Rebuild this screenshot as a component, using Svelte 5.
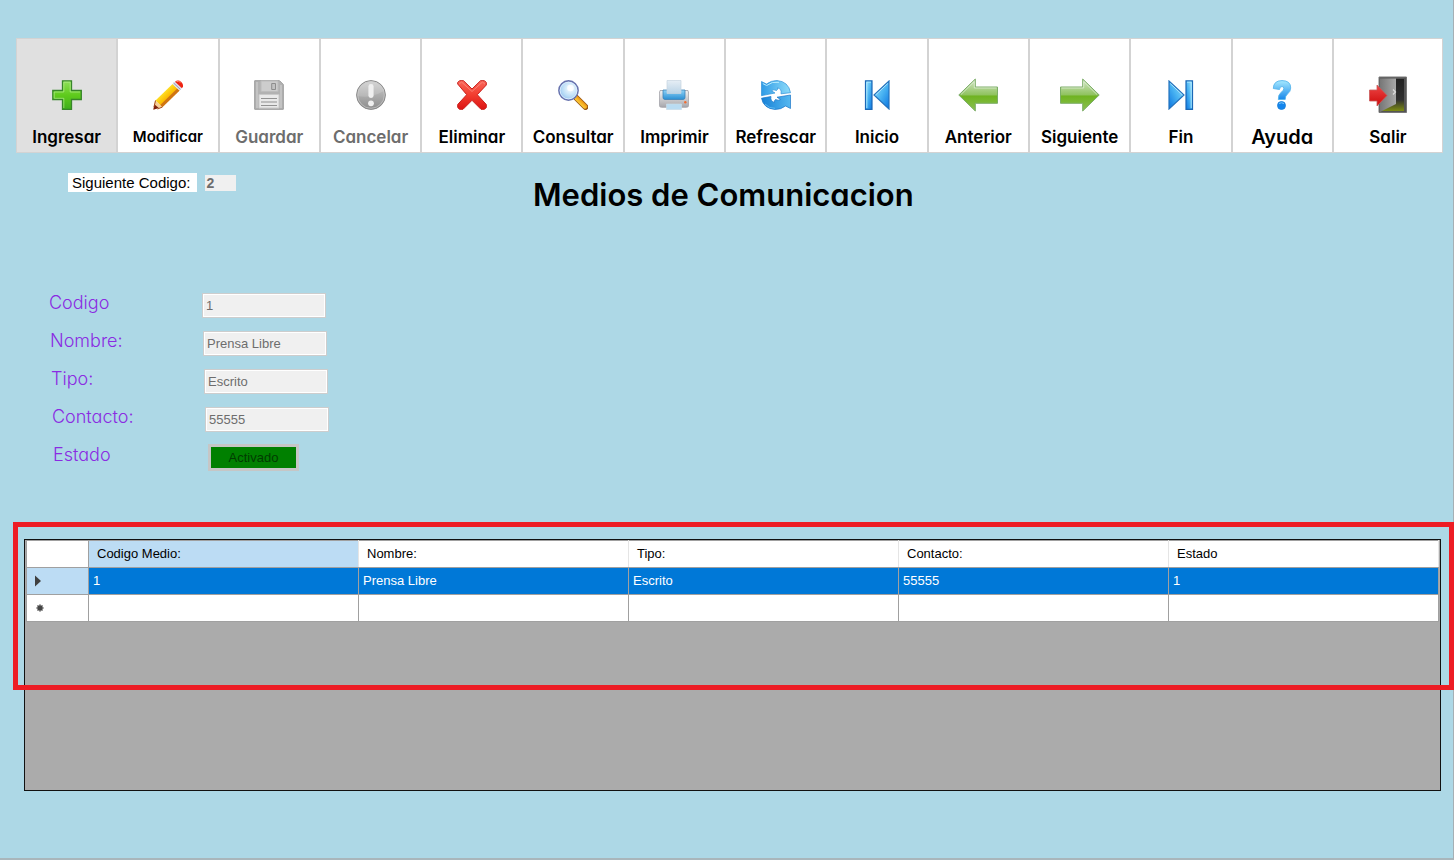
<script>
  const actions = [
    { id: 'ingresar', label: 'Ingresar', active: true },
    { id: 'modificar', label: 'Modificar', size: 'small' },
    { id: 'guardar', label: 'Guardar', disabled: true },
    { id: 'cancelar', label: 'Cancelar', disabled: true },
    { id: 'eliminar', label: 'Eliminar' },
    { id: 'consultar', label: 'Consultar' },
    { id: 'imprimir', label: 'Imprimir' },
    { id: 'refrescar', label: 'Refrescar' },
    { id: 'inicio', label: 'Inicio' },
    { id: 'anterior', label: 'Anterior' },
    { id: 'siguiente', label: 'Siguiente' },
    { id: 'fin', label: 'Fin' },
    { id: 'ayuda', label: 'Ayuda', size: 'large' },
    { id: 'salir', label: 'Salir' }
  ];

  const fields = [
    { id: 'codigo', label: 'Codigo', value: '1' },
    { id: 'nombre', label: 'Nombre:', value: 'Prensa Libre' },
    { id: 'tipo', label: 'Tipo:', value: 'Escrito' },
    { id: 'contacto', label: 'Contacto:', value: '55555' }
  ];

  const columns = ['Codigo Medio:', 'Nombre:', 'Tipo:', 'Contacto:', 'Estado'];
  const record = ['1', 'Prensa Libre', 'Escrito', '55555', '1'];
</script>

<svg class="defs" width="0" height="0" aria-hidden="true">
  <defs>
    <linearGradient id="plus" x1="0" y1="0" x2="0" y2="1"><stop offset="0" stop-color="#8fe05a" /><stop offset=".5" stop-color="#5fcb1c" /><stop offset="1" stop-color="#3fae1c" /></linearGradient>
    <linearGradient id="pencil" x1="0" y1="0" x2="1" y2="1"><stop offset=".3" stop-color="#ffe92e" /><stop offset=".55" stop-color="#fbb800" /><stop offset=".75" stop-color="#c96a10" /></linearGradient>
    <linearGradient id="metal" x1="0" y1="0" x2="0" y2="1"><stop offset="0" stop-color="#cfcfcf" /><stop offset="1" stop-color="#8c8c8c" /></linearGradient>
    <linearGradient id="cross" x1="0" y1="0" x2="0" y2="1"><stop offset="0" stop-color="#f9665a" /><stop offset=".5" stop-color="#f23d2f" /><stop offset="1" stop-color="#dc1414" /></linearGradient>
    <radialGradient id="lens" cx=".6" cy=".4" r=".7"><stop offset="0" stop-color="#fafeff" /><stop offset=".6" stop-color="#b9dcf6" /><stop offset="1" stop-color="#8ab8ea" /></radialGradient>
    <linearGradient id="handle" x1="0" y1="1" x2="1" y2="0"><stop offset=".3" stop-color="#ffd23c" /><stop offset=".7" stop-color="#ef9410" /></linearGradient>
    <linearGradient id="paper" x1="0" y1="0" x2="0" y2="1"><stop offset="0" stop-color="#e6eef5" /><stop offset="1" stop-color="#b9d3e6" /></linearGradient>
    <linearGradient id="tray" x1="0" y1="0" x2="0" y2="1"><stop offset="0" stop-color="#8ed2f7" /><stop offset="1" stop-color="#2a8fd3" /></linearGradient>
    <linearGradient id="body" x1="0" y1="0" x2="0" y2="1"><stop offset="0" stop-color="#f4f4f4" /><stop offset="1" stop-color="#a6a6ab" /></linearGradient>
    <linearGradient id="blue" x1="0" y1="0" x2="1" y2="1"><stop offset="0" stop-color="#a4e8ff" /><stop offset=".5" stop-color="#4ab4f2" /><stop offset="1" stop-color="#0a74e0" /></linearGradient>
    <linearGradient id="swirl-top" x1="0" y1="0" x2="1" y2="0"><stop offset="0" stop-color="#2f9be6" /><stop offset="1" stop-color="#8edcfa" /></linearGradient>
    <linearGradient id="swirl-bottom" x1="0" y1="0" x2="1" y2="0"><stop offset="0" stop-color="#1680d6" /><stop offset="1" stop-color="#55b8f0" /></linearGradient>
    <linearGradient id="green" x1="0" y1="0" x2="0" y2="1"><stop offset=".1" stop-color="#c6e0b4" /><stop offset=".5" stop-color="#8fc25e" /><stop offset=".53" stop-color="#6fb321" /><stop offset="1" stop-color="#8cc152" /></linearGradient>
    <linearGradient id="help" x1="0" y1="0" x2="0" y2="1"><stop offset="0" stop-color="#a6e9ff" /><stop offset="1" stop-color="#1687ea" /></linearGradient>
    <linearGradient id="door" x1="0" y1="0" x2="1" y2="0"><stop offset="0" stop-color="#777" /><stop offset="1" stop-color="#a8a8a8" /></linearGradient>
    <linearGradient id="exit" x1="0" y1="0" x2="0" y2="1"><stop offset="0" stop-color="#ee4646" /><stop offset="1" stop-color="#cc0909" /></linearGradient>
    <linearGradient id="floor" x1="0" y1="0" x2="0" y2="1"><stop offset="0" stop-color="#222" /><stop offset=".65" stop-color="#303030" /><stop offset="1" stop-color="#7d8c12" /></linearGradient>
  </defs>
</svg>

{#snippet icon(id)}
  {#if id === 'anterior' || id === 'siguiente'}
    <svg width="40" height="34" viewBox="0 0 40 34" aria-hidden="true">
      <g transform={id === 'siguiente' ? 'translate(40 0) scale(-1 1)' : undefined}>
        <path d="M.8 17 17.3 1v8H39.5V25.300H17.300V33Z" fill="url(#green)" stroke="#7cad68" />
        <path d="M3 16.500 16.300 3.500V10H38.500" fill="none" stroke="#e2f0da" stroke-opacity=".7" />
      </g>
    </svg>
  {:else if id === 'salir'}
    <svg width="38" height="38" viewBox="0 0 38 38" aria-hidden="true">
      <path d="M10 1H37.500V36.500H10Z" fill="#555" stroke="#777" />
      <path d="M12 3H35V35H12Z" fill="url(#floor)" />
      <path d="M11 2.500H27V28L11 36Z" fill="url(#door)" />
      <path d="M24 13.500l2.500 2.500-2.500 2.500" fill="none" stroke="#ddd" stroke-width="1.200" />
      <path d="M.5 14H8V9L18 19.500 8 30V25H.5Z" fill="url(#exit)" stroke="#c95c5c" stroke-width=".8" />
    </svg>
  {:else}
    <svg width="30" height="30" viewBox="0 0 30 30" aria-hidden="true">
      {#if id === 'ingresar'}
        <path d="M10.500.8H19.500V10.500H29.300V19.500H19.500V29.300H10.500V19.500H.8V10.500H10.500Z" fill="url(#plus)" stroke="#37852a" stroke-width="1.300" />
        <path d="M11.800 28V18.300H2.200V12H11.800V2.200H18.200V12H28" fill="none" stroke="#b0ec8a" stroke-opacity=".7" />
      {:else if id === 'modificar'}
        <path d="M.5 29.500 2.500 20.500 9.500 27Z" fill="#f7cf98" />
        <path d="M.3 29.700 1.300 24.300 5.800 28Z" fill="#7c1f0c" />
        <path d="M2.500 20.500 19.500 4 26.500 10.500 9.500 27Z" fill="url(#pencil)" />
        <path d="M9.500 27 26.500 10.500l-2.200-2L7.300 25Z" fill="#cf7413" />
        <path d="M2.500 20.500 1 27M9.500 27 4.500 29" stroke="#a34716" />
        <path d="m19.500 4 2.600-2.400 6.700 6.500-2.300 2.400Z" fill="#dcdfeb" />
        <path d="m20.600 3 6.900 6.500" stroke="#8b88a0" stroke-width=".8" />
        <path d="M22 1.700Q25-.8 28.300 2 31.500 5.500 28.900 8.200Z" fill="#ee2413" />
        <path d="M23.500 1.600q2-1 4 .8" stroke="#ff8b70" fill="none" />
      {:else if id === 'guardar'}
        <path d="M.7.700H25.500L29.300 4.500V29.300H.7Z" fill="#b2b2b2" stroke="#9b9b9b" />
        <path d="M2 2H4V28H2ZM26 5h2v23h-2z" fill="#c3c3c3" />
        <path d="M7 1H24V11.500H7Z" fill="#cdcdcd" stroke="#bcbcbc" />
        <path d="M17.700 3.500H21.500V9.500H17.700Z" fill="#c2c2c2" stroke="#8d8d8d" />
        <path d="M5 14.500H25V28H5Z" fill="#e9e9e9" stroke="#c9c9c9" />
        <path d="M7 18.500H23M7 22H23M7 25.500H23" stroke="#929292" stroke-width="1.200" />
      {:else if id === 'cancelar'}
        <circle cx="15" cy="15" r="14.400" fill="url(#metal)" stroke="#898989" />
        <circle cx="15" cy="15" r="13.300" fill="none" stroke="#c4c4c4" stroke-width=".8" />
        <path d="M1.800 16Q13 19 28 11A13.400 13.400 0 0 0 1.800 16Z" fill="#fff" fill-opacity=".15" />
        <rect x="12.400" y="4" width="5.200" height="14" rx="2.400" fill="#efefef" />
        <circle cx="15" cy="23.300" r="2.900" fill="#efefef" />
      {:else if id === 'eliminar'}
        <path d="M.7 4V2.500L2.500.700H6.500L15 9 23.500.700H27.500L29.300 2.500V5L20.300 14.700 29.300 24.500V27.500L27.500 29.300H24L15 20.300 6 29.300H2.500L.7 27.500V24.500L9.700 14.700Z" fill="url(#cross)" stroke="#c8201c" stroke-linejoin="round" />
        <path d="M2 4.200 4.500 2 15 11.500 25.500 2 28 4.200" fill="none" stroke="#ff9f91" stroke-opacity=".6" />
      {:else if id === 'consultar'}
        <path d="M18 17.500 27.500 27" stroke="#9a5814" stroke-width="6" stroke-linecap="round" />
        <path d="M18.500 18 27 26.500" stroke="url(#handle)" stroke-width="4.200" stroke-linecap="round" />
        <circle cx="10.500" cy="10.500" r="9.600" fill="url(#lens)" stroke="#6873ae" stroke-width="1.600" />
        <circle cx="10.500" cy="10.500" r="8.400" fill="none" stroke="#e5f3ff" stroke-width=".8" />
        <circle cx="12.500" cy="8" r="3.300" fill="#fff" fill-opacity=".8" />
      {:else if id === 'imprimir'}
        <path d="M1 10.500H29L29.600 13V25.500Q29.600 27.300 27.500 27.300H2.500Q.4 27.300.4 25.500V13Z" fill="url(#body)" stroke="#a0a0a6" stroke-width=".8" />
        <path d="M4 10H26V17.500Q26 19.500 24 19.500H6Q4 19.500 4 17.500Z" fill="url(#tray)" stroke="#3e83b8" stroke-width=".8" />
        <path d="M8 .5H22V13.500H8Z" fill="url(#paper)" stroke="#c5d4df" stroke-width=".7" />
        <path d="M7.500 24H22.500V29.600H7.500Z" fill="#b9dcf2" stroke="#c9dce8" stroke-width=".7" />
        <circle cx="26.300" cy="22.300" r="1.200" fill="#f26c31" />
      {:else if id === 'refrescar'}
        <path d="M.5 1.500 5.500 4Q10 .500 16 .500 27.500 1.500 29.500 12.700L20 13.800Q21 9 16.500 7.800 17 9.800 15.500 10.500 12.500 9 10.500 10.800L14 13 .5 15.700Z" fill="url(#swirl-top)" stroke="#2f91d8" stroke-width=".7" />
        <path d="M29.500 28.500 24.500 26Q20 29.500 14 29.500 2.500 28.500.5 18.200L10 16.500Q9 21 13.500 22.500 13 20.500 14.500 19.500 17.500 21 19.500 19.500L16 17.200 29.500 15Z" fill="url(#swirl-bottom)" stroke="#1c75c7" stroke-width=".7" />
        <path d="M1.800 3.600 5.700 5.500Q11 1 18 2.300" fill="none" stroke="#b9ecff" />
        <path d="M4 24Q8 28.500 14 28.300" fill="none" stroke="#58b8f2" />
      {:else if id === 'inicio' || id === 'fin'}
        <g transform={id === 'fin' ? 'translate(30 0) scale(-1 1)' : undefined}>
          <path d="M3.500.800H10V29.300H3.500Z" fill="url(#blue)" stroke="#1b68b6" stroke-width="1.200" />
          <path d="M4.800 28V2.200H9" fill="none" stroke="#b9efff" stroke-opacity=".8" />
          <path d="M27 1V29L12 15Z" fill="url(#blue)" stroke="#2472bd" stroke-width="1.200" />
          <path d="M25.800 3.500 13.500 15" stroke="#c2f0ff" stroke-opacity=".8" />
        </g>
      {:else if id === 'ayuda'}
        <path d="M6.300 8.500Q6.500.600 15 .600 23.700.600 23.700 8 23.700 11.500 20.500 14 18.200 15.700 18.200 19.500H11.300Q11 14.500 14.500 12 16.800 10.300 16.800 8.500 16.800 6.500 15 6.500 12.700 6.500 12.500 9.500Z" fill="url(#help)" stroke="#58b5ec" stroke-width=".9" />
        <circle cx="14.500" cy="25.500" r="4" fill="#1486ee" stroke="#1c7fd4" stroke-width=".8" />
        <path d="M12 23.500q2.500-1.500 5 0" fill="none" stroke="#7cc8fa" />
      {/if}
    </svg>
  {/if}
{/snippet}

<main class="page">
  <nav class="toolbar" aria-label="Acciones">
    {#each actions as action}
      <button type="button" class="action {action.size ?? ''}" class:active={action.active} disabled={action.disabled}>
        <span class="icon">{@render icon(action.id)}</span>
        <span class="caption">{action.label}</span>
      </button>
    {/each}
  </nav>

  <header class="heading">
    <div class="next-code">
      <label for="siguiente-codigo">Siguiente Codigo:</label>
      <input id="siguiente-codigo" value="2" disabled />
    </div>
    <h1>Medios de Comunicacion</h1>
  </header>

  <form class="form">
    {#each fields as field, i}
      <div class="field" style="--row: {i}">
        <label for={field.id}>{field.label}</label>
        <input id={field.id} value={field.value} disabled />
      </div>
    {/each}
    <div class="field" style="--row: {fields.length}">
      <label for="estado">Estado</label>
      <button type="button" id="estado" class="state" disabled>Activado</button>
    </div>
  </form>

  <section class="records">
    <div class="grid">
      <table>
        <colgroup>
          <col class="marker-col" />
          {#each columns as _}<col />{/each}
        </colgroup>
        <thead>
          <tr>
            <td></td>
            {#each columns as column, i}<th scope="col" class:current={i === 0}>{column}</th>{/each}
          </tr>
        </thead>
        <tbody>
          <tr class="selected">
            <td class="marker">
              <svg width="8" height="12" viewBox="0 0 8 12" aria-hidden="true"><path d="M1 .5 7 6 1 11.500Z" fill="#404040" /></svg>
            </td>
            {#each record as value}<td>{value}</td>{/each}
          </tr>
          <tr>
            <td class="marker new">
              <svg width="8" height="8" viewBox="0 0 8 8" aria-hidden="true"><path d="M4 .5V7.500M.5 4H7.500M1.500 1.500 6.500 6.500M6.500 1.500 1.500 6.500" stroke="#444" stroke-width="1.500" /></svg>
            </td>
            {#each columns as _}<td></td>{/each}
          </tr>
        </tbody>
      </table>
    </div>
    <div class="highlight"></div>
  </section>
</main>

<style>
  :global(body) {
    margin: 0;
    background: #add8e6;
  }

  .defs {
    position: absolute;
  }

  .page {
    box-sizing: border-box;
    display: flex;
    flex-direction: column;
    min-height: 100vh;
    padding: 38px 0 67px;
    border-right: 1px solid #a5b0b5;
    border-bottom: 2px solid #a9b6bb;
    background: #add8e6;
    color: #000;
    font-family: "Liberation Sans", Arial, sans-serif;
    font-size: 13px;
  }

  button,
  input {
    font: inherit;
    border-radius: 0;
  }

  .toolbar {
    display: flex;
    margin: 0 10px 0 16px;
  }

  .action {
    box-sizing: border-box;
    display: flex;
    flex: 101 1 0;
    flex-direction: column;
    align-items: center;
    gap: 13px;
    min-width: 0;
    height: 115px;
    padding: 37px 0 0;
    border: 1px solid #d3d3d3;
    background: #fff;
    color: #000;
    font-family: "Century Gothic", Inter, sans-serif;
    font-size: 17px;
    font-weight: 600;
    font-feature-settings: "cv11";
  }

  .action:last-child {
    flex-grow: 110;
  }

  .action.active {
    background: #e0e0e0;
  }

  .action:disabled {
    color: #6d6d6d;
  }

  .action.small {
    font-size: 15px;
  }

  .action.large {
    font-size: 20px;
  }

  .icon {
    display: flex;
    align-items: center;
    height: 38px;
  }

  .caption {
    line-height: 20px;
  }

  .heading {
    display: grid;
    grid-template-columns: 465px 1fr;
    align-items: start;
    padding: 20px 0 0 68px;
  }

  .next-code {
    display: flex;
    align-items: center;
    gap: 8px;
    font-size: 15px;
  }

  .next-code label {
    padding: 0 7px 0 4px;
    background: #fff;
    line-height: 19px;
  }

  .next-code input {
    box-sizing: border-box;
    width: 31px;
    height: 16px;
    padding: 0 1px;
    border: 0;
    background: #f0f0f0;
    color: #6d6d6d;
    font-size: 14px;
    font-weight: 700;
  }

  h1 {
    margin: 4px 0 0;
    font-family: "Century Gothic", Inter, sans-serif;
    font-size: 31px;
    font-weight: 600;
    font-feature-settings: "cv11";
    line-height: 36px;
  }

  .form {
    padding: 73px 0 0 49px;
  }

  .field {
    display: grid;
    grid-template-columns: 153px 124px;
    align-items: center;
    height: 38px;
    margin-left: calc(var(--row) * 1px);
  }

  .field label {
    padding-bottom: 4px;
    color: #8a2be2;
    font-family: "Century Gothic", Inter, sans-serif;
    font-size: 18px;
    font-weight: 300;
    font-feature-settings: "cv11";
    line-height: 22px;
  }

  .field input {
    box-sizing: border-box;
    width: 100%;
    height: 25px;
    padding: 0 3px;
    border: 1px solid #cdcdcd;
    outline: 1px solid #fff;
    outline-offset: -2px;
    background: #f0f0f0;
    color: #6d6d6d;
  }

  .state {
    justify-self: start;
    width: 91px;
    height: 27px;
    margin-left: 2px;
    padding: 0;
    border: 3px solid #c6c6c6;
    background: #008000;
    color: #003c00;
  }

  .records {
    position: relative;
    display: flex;
    flex: 1;
    margin: 63px 12px 0 24px;
  }

  .grid {
    flex: 1;
    min-height: 240px;
    border: 1px solid #111;
    background: #ababab;
    padding: 0 1px;
  }

  table {
    width: 100%;
    table-layout: fixed;
    border-collapse: collapse;
  }

  .marker-col {
    width: 62px;
  }

  th,
  td {
    box-sizing: border-box;
    height: 27px;
    padding: 0 4px;
    border: 1px solid #a0a0a0;
    background: #fff;
    font-weight: 400;
    line-height: 16px;
    text-align: left;
  }

  th {
    padding: 0 8px;
    border-right-color: #e5e5e5;
    border-left-color: #e5e5e5;
  }

  th.current {
    background: #bcdcf4;
  }

  .selected td {
    background: #0078d7;
    color: #fff;
  }

  .selected .marker {
    background: #bcdcf4;
  }

  .marker {
    padding-left: 7px;
  }

  .marker.new {
    padding-left: 9px;
  }

  .marker svg {
    display: block;
  }

  .highlight {
    position: absolute;
    top: -17px;
    right: -13px;
    left: -11px;
    box-sizing: border-box;
    height: 168px;
    border: 5px solid #ed1c24;
    pointer-events: none;
  }
</style>
